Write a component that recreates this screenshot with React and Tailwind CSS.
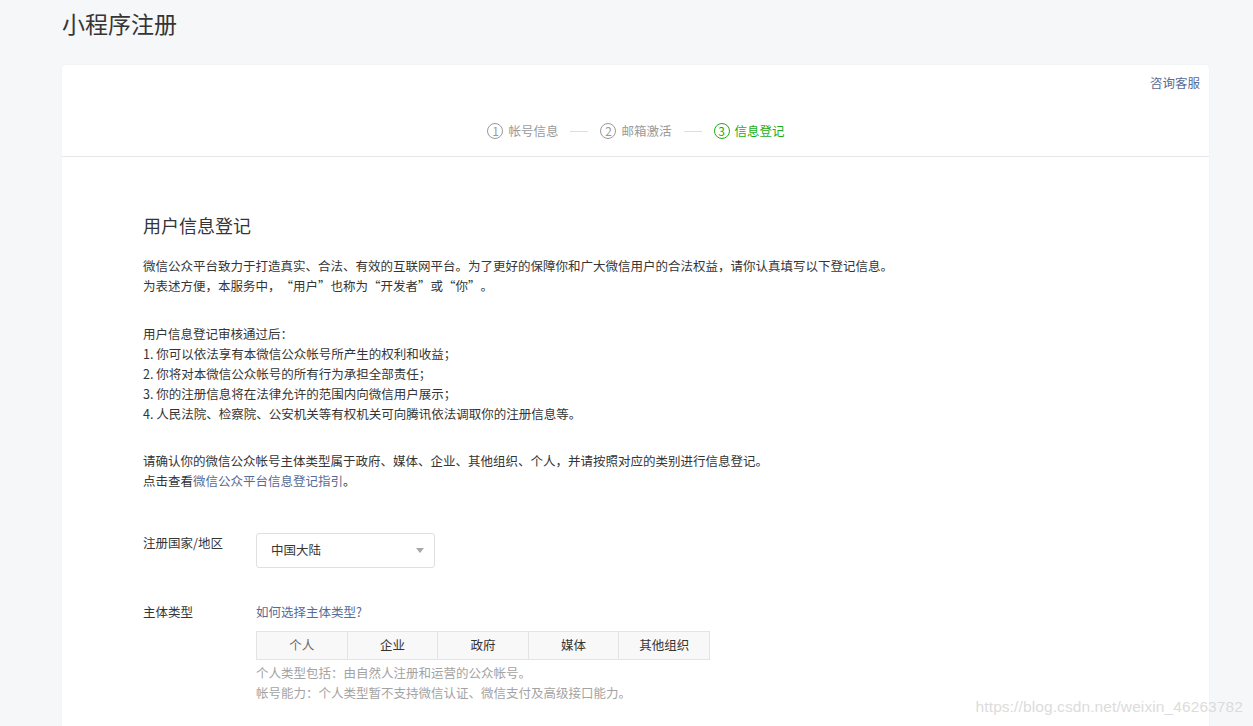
import React from 'react';

const steps = [
  { n: '1', label: '帐号信息', active: false },
  { n: '2', label: '邮箱激活', active: false },
  { n: '3', label: '信息登记', active: true },
];

const types = ['个人', '企业', '政府', '媒体', '其他组织'];

// full-width quote marks, as the original font draws them
const Lq = () => <span className="inline-block w-[1em] text-right">“</span>;
const Rq = () => <span className="inline-block w-[1em] text-left">”</span>;

export default function App() {
  return (
    <div
      className="min-h-screen bg-[#f6f7f9] text-[#353535] relative overflow-hidden"
      style={{ fontFamily: '"Noto Sans CJK SC", "Noto Sans", sans-serif' }}
    >
      <div className="pl-[62px] pr-[44px]">
        {/* Page title */}
        <h1 className="h-[65px] pt-[6px] text-[23px] leading-[34px] text-[#353535]">小程序注册</h1>

        {/* Card */}
        <div className="bg-white rounded-t-[4px] shadow-[0_0_2px_rgba(0,0,0,0.06)] min-h-[661px]">
          {/* Card header */}
          <div className="h-[92px] border-b border-[#e7e7eb] relative">
            <a className="absolute right-[9px] top-[9px] text-[12.5px] leading-[18px] text-[#576b95]">咨询客服</a>
            <div className="flex items-center justify-center pt-[57px] pl-[1px]">
              {steps.map((s, i) => (
                <React.Fragment key={s.n}>
                  {i > 0 && <span className="w-[18px] h-px bg-[#dedede] mx-[12px]" />}
                  <div className={`flex items-center text-[12.5px] leading-[18px] ${s.active ? 'text-[#1aad19]' : 'text-[#9a9a9a]'}`}>
                    <span
                      className={`w-[16px] h-[16px] rounded-full border flex items-center justify-center text-[12px] leading-none mr-[5px] ${s.active ? 'border-[#1aad19]' : 'border-[#9a9a9a]'}`}
                    >
                      {s.n}
                    </span>
                    {s.label}
                  </div>
                </React.Fragment>
              ))}
            </div>
          </div>

          {/* Body */}
          <div className="pl-[81px] pr-[40px] pt-[53px] pb-[40px]">
            <h2 className="text-[18px] leading-[30px] mb-[16px]">用户信息登记</h2>

            <div className="text-[12.5px] leading-[20px]">
              <p>微信公众平台致力于打造真实、合法、有效的互联网平台。为了更好的保障你和广大微信用户的合法权益，请你认真填写以下登记信息。</p>
              <p>
                为表述方便，本服务中，<Lq />用户<Rq />也称为<Lq />开发者<Rq />或<Lq />你<Rq />。
              </p>

              <div className="mt-[28px]">
                <p>用户信息登记审核通过后：</p>
                <p>1. 你可以依法享有本微信公众帐号所产生的权利和收益；</p>
                <p>2. 你将对本微信公众帐号的所有行为承担全部责任；</p>
                <p>3. 你的注册信息将在法律允许的范围内向微信用户展示；</p>
                <p>4. 人民法院、检察院、公安机关等有权机关可向腾讯依法调取你的注册信息等。</p>
              </div>

              <div className="mt-[27px]">
                <p>请确认你的微信公众帐号主体类型属于政府、媒体、企业、其他组织、个人，并请按照对应的类别进行信息登记。</p>
                <p>
                  点击查看<a className="text-[#576b95]">微信公众平台信息登记指引</a>。
                </p>
              </div>
            </div>

            {/* Country */}
            <div className="flex mt-[42px]">
              <label className="w-[113px] text-[12.5px] leading-[20px]">注册国家/地区</label>
              <div className="w-[179px] h-[35px] border border-[#e0e0e0] rounded-[3px] flex items-center justify-between pl-[14px] pr-[10px]">
                <span className="text-[12.5px]">中国大陆</span>
                <span className="w-0 h-0 border-l-[4px] border-r-[4px] border-t-[5px] border-l-transparent border-r-transparent border-t-[#a8a8a8]" />
              </div>
            </div>

            {/* Type */}
            <div className="flex mt-[34px]">
              <label className="w-[113px] text-[12.5px] leading-[20px]">主体类型</label>
              <div>
                <a className="block text-[12.5px] leading-[20px] text-[#576b95]">如何选择主体类型?</a>
                <div className="flex mt-[9px] border border-[#e4e4e4] bg-[#f8f8f8] w-[454px]">
                  {types.map((t, i) => (
                    <div
                      key={t}
                      className={`flex-1 h-[27px] flex items-center justify-center text-[12.5px] ${i > 0 ? 'border-l border-[#e4e4e4]' : ''} ${i === 0 ? 'text-[#6a6a6a]' : ''}`}
                    >
                      {t}
                    </div>
                  ))}
                </div>
                <div className="mt-[3px] text-[12.5px] leading-[20px] text-[#a3a3a3]">
                  <p>个人类型包括：由自然人注册和运营的公众帐号。</p>
                  <p>帐号能力：个人类型暂不支持微信认证、微信支付及高级接口能力。</p>
                </div>
              </div>
            </div>
          </div>
        </div>
      </div>

      {/* Watermark */}
      <div
        className="absolute right-[10px] top-[697px] text-[15.5px] leading-[20px] text-[#dcdcdc] tracking-[0.1px]"
        style={{ fontFamily: '"Liberation Sans", Arial, sans-serif' }}
      >
        https://blog.csdn.net/weixin_46263782
      </div>
    </div>
  );
}
